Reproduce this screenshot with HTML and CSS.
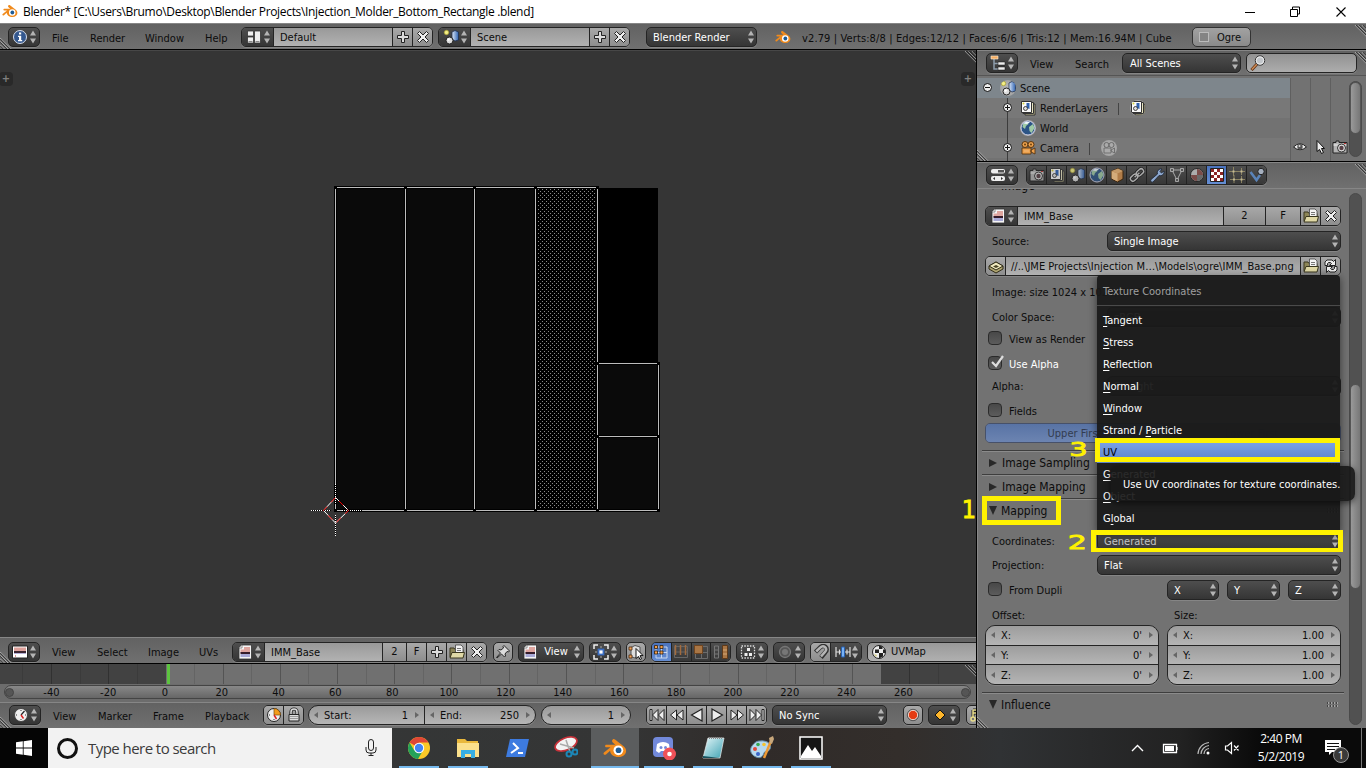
FILE: index.html
```html
<!DOCTYPE html>
<html lang="en">
<head>
<meta charset="utf-8">
<title>Blender</title>
<link rel="stylesheet" href="styles.css">
</head>
<body>
<svg class="sprite" width="0" height="0">
  <defs>
    <linearGradient id="blueg" x1="0" y1="0" x2="1" y2="0"><stop offset="0" stop-color="#dbe8fa"/><stop offset="1" stop-color="#2f62b0"/></linearGradient>
    <linearGradient id="noteg" x1="0" y1="0" x2="1" y2="1"><stop offset="0" stop-color="#e4f6f8"/><stop offset="1" stop-color="#3fa3b4"/></linearGradient>
    <pattern id="dots" x="538" y="189" width="4" height="4" patternUnits="userSpaceOnUse"><rect width="1" height="1" fill="#8a8a8a"/><rect x="2" y="2" width="1" height="1" fill="#8a8a8a"/></pattern>
  </defs>
  <symbol id="ud" viewBox="0 0 6 14"><path d="M3 0.5 6 5.5H0zM3 13.5 6 8.5H0z" fill="#b4b4b4"/></symbol>
  <symbol id="blender" viewBox="0 0 32 26"><path d="M13 1.5c1-.8 2-.7 3 .1l11.500 9c7 6 2 14.500-6.500 14.500-7 0-11.500-4-11.500-8.500L4 21.500c-2 1.500-4.500-.5-2.700-2.600L10 12H4.500c-2.300 0-2.300-3.500 0-3.500h12L13 5.500c-1.300-1-1.200-3 0-4z" fill="#f08a1c"/><circle cx="20.500" cy="16" r="6.500" fill="#fff"/><circle cx="20.700" cy="16" r="3.800" fill="#1d5b96"/></symbol>
  <symbol id="info" viewBox="0 0 16 16"><circle cx="8" cy="8" r="6.500" fill="#34588f" stroke="#d5dcea"/><path d="M7 3.500h2.200v2H7zM6 6.700h3.200V11h1v1.300H6V11h1V8H6z" fill="#fff"/></symbol>
  <symbol id="layout" viewBox="0 0 16 16"><path d="M1.500 2h6v5h-6zM1.500 8h6v6h-6zM8.500 2h6v12h-6z" fill="#eee" stroke="#333" stroke-width=".8"/><path d="M2.500 12.500h4M9.500 12.500h4" stroke="#888"/></symbol>
  <symbol id="scene" viewBox="0 0 16 16"><path d="M9 3l3-1.500L15.500 3v8L12 12 9 10z" fill="url(#blueg)" stroke="#1e3050" stroke-width=".8"/><circle cx="6.500" cy="11.500" r="3.500" fill="#ddd" stroke="#222"/><circle cx="5.500" cy="10.500" r="1.300" fill="#fff"/><circle cx="3.500" cy="3.500" r="2.200" fill="#f4ef86" stroke="#aaa136" stroke-width=".8"/></symbol>
  <symbol id="plus" viewBox="0 0 16 16"><path d="M6.500 2.500h3v4h4v3h-4v4h-3v-4h-4v-3h4z" fill="#ddd" stroke="#222"/></symbol>
  <symbol id="cross" viewBox="0 0 16 16"><path d="M4.500 2.500 8 6l3.500-3.500 2 2L10 8l3.500 3.500-2 2L8 10l-3.500 3.500-2-2L6 8 2.500 4.500z" fill="#eee" stroke="#222"/></symbol>
  <symbol id="folder" viewBox="0 0 16 16"><path d="M1 13V4h4l1 1.500h8V13z" fill="#8c8557" stroke="#3a371e"/><path d="M6.500 1h5.500l2 2v6H6.500z" fill="#f3f3f3" stroke="#444" stroke-width=".8"/><path d="M8 4.500h4M8 6.500h4" stroke="#777"/><path d="M1 14 3 8.500h12.500L14 14z" fill="#e0d9a6" stroke="#3a371e"/></symbol>
  <symbol id="image" viewBox="0 0 16 16"><path d="M5 1h9.500v14H2V4z" fill="#f5f5f5" stroke="#333" stroke-width=".8"/><path d="M2 4h3V1" fill="#fff" stroke="#666" stroke-width=".7"/><path d="M3.500 5.500H7V3h6v6H3.500z" fill="#dea59f"/><path d="M3.500 8h9.500v2H3.500z" fill="#351c2a"/><path d="M3.500 10h9.500v3H3.500z" fill="#a8a9d6"/></symbol>
  <symbol id="uvimg" viewBox="0 0 16 16"><path d="M.5 2h15v12H.5z" fill="#fff" stroke="#222"/><path d="M2 3.500h12V7H2z" fill="#dca09a"/><path d="M2 7h12v2H2z" fill="#3a2430"/><path d="M2 9h12v1H2z" fill="#b5b0d5"/><path d="M3 12h1" stroke="#b22"/></symbol>
  <symbol id="clock" viewBox="0 0 16 16"><circle cx="8" cy="8" r="6.500" fill="#f0f0f0" stroke="#444"/><path d="M8 8l3.500-4" stroke="#222" stroke-width="1.200"/><path d="M8 8l2.500 3.500" stroke="#d22" stroke-width="1.500"/><path d="M3 8h1M8 3v1M12 8h1M8 12v1" stroke="#333"/></symbol>
  <symbol id="clocko" viewBox="0 0 16 16"><circle cx="8" cy="8" r="6.500" fill="#f0f0f0" stroke="#222"/><path d="M8 8V1.500A6.500 6.500 0 0 1 14.500 8z" fill="#f49b18" stroke="#774c10" stroke-width=".7"/><path d="M8 8l2.500 4" stroke="#d22" stroke-width="1.500"/><path d="M3 8h1M8 12v1" stroke="#333"/></symbol>
  <symbol id="lock" viewBox="0 0 16 16"><path d="M5 8V5a3 3 0 0 1 6 0v3" fill="none" stroke="#222" stroke-width="3.200"/><path d="M5 8V5a3 3 0 0 1 6 0v3" fill="none" stroke="#ddd" stroke-width="1.500"/><path d="M3 7.500h10V14H3z" fill="#ddd" stroke="#222"/><path d="M4 9.500h8M4 11.500h8" stroke="#999"/></symbol>
  <symbol id="pin" viewBox="0 0 16 16"><path d="M9 1.500 14.500 7l-1 1-1.500-.5-2 2.500.5 2-1 1-3-3L2 14l-.5-.5L5.500 9 3 6.500l1-1 2 .5L8.500 4 8 2.500z" fill="#ddd" stroke="#222"/></symbol>
  <symbol id="pivot" viewBox="0 0 16 16"><path d="M1 5V1h4M11 1h4v4M15 11v4h-4M5 15H1v-4" fill="none" stroke="#eee" stroke-width="1.500"/><path d="M8 2v2M8 12v2M2 8h2M12 8h2" stroke="#aaa"/><rect x="5.500" y="5.500" width="5" height="5" fill="#fff" stroke="#3c6fc4" stroke-width="1.800"/></symbol>
  <symbol id="sync" viewBox="0 0 16 16"><path d="M3 3.500 7 1.500l5 1.500v9L7 14l-4-1.500z" fill="#ddd" stroke="#555"/><path d="M1 3h3v3H1zM1 11h3v3H1z" fill="#f2a35a" stroke="#4b2a0c" stroke-width=".8"/><path d="M8 4.500v10l2.500-2 1.500 3 1.500-.8-1.500-3 3-.2z" fill="#fff" stroke="#111"/></symbol>
  <symbol id="mvert" viewBox="0 0 16 16"><path d="M3 3h11v11H3zM3 8.500h11M8.500 3v11" fill="none" stroke="#c8d7ef"/><path d="M1.500 1.500h3v3h-3zM7 1.500h3v3H7zM1.500 7h3v3h-3zM7 7h3v3H7z" fill="#f7a04a" stroke="#30200c" stroke-width=".8"/></symbol>
  <symbol id="medge" viewBox="0 0 16 16"><path d="M1.500 2.500h13v11h-13zM1.500 8h13" fill="none" stroke="#666"/><path d="M2.500 1v10M7.500 1v10M12.500 1v10" stroke="#a26b3e" stroke-width="1.500"/></symbol>
  <symbol id="mface" viewBox="0 0 16 16"><path d="M2.500 2.500h12v12h-12zM8.500 2.500v12M2.500 8.500h12" fill="none" stroke="#6c6c6c"/><path d="M1.500 1.500h8v8h-8z" fill="#a97645" stroke="#71451f"/></symbol>
  <symbol id="misle" viewBox="0 0 16 16"><path d="M1.500 2h4v12h-4zM1.500 6h4M1.500 10h4" fill="none" stroke="#777"/><path d="M9.500 1.500h5v13h-5z" fill="#a97645" stroke="#603a19"/><path d="M10 6h4M10 10h4" stroke="#d4a675"/></symbol>
  <symbol id="sticky" viewBox="0 0 16 16"><rect x="1.500" y="2" width="13" height="12" fill="none" stroke="#ddd" stroke-width="1.300" stroke-dasharray="1.500 1.300"/><path d="M7 4h3v3H7zM4.500 9h3v3h-3zM9 9h3v3H9z" fill="#eee"/></symbol>
  <symbol id="prop" viewBox="0 0 16 16"><circle cx="8" cy="8" r="5.500" fill="#565656" stroke="#777" stroke-width="1.300"/><circle cx="8" cy="8" r="3" fill="#777"/></symbol>
  <symbol id="magnet" viewBox="0 0 16 16"><path d="M2.500 8 7 3.500c4-4 9 1 5.500 4.500L8 13.500" fill="none" stroke="#333" stroke-width="4.500"/><path d="M3.200 7.500 7.200 3.700c3.500-3.500 8 1 5 4L8 12.500" fill="none" stroke="#b5b5b5" stroke-width="2.500"/></symbol>
  <symbol id="snap" viewBox="0 0 16 16"><path d="M1 3v10M4.500 5.500v5M12 5.500v5M15 3v10M1 8h14" stroke="#ddd" stroke-width="1.200"/><path d="M6.500 3h3v10h-3z" fill="#78b2f5" stroke="#2a60ae"/></symbol>
  <symbol id="uvmap" viewBox="0 0 16 16"><circle cx="8" cy="8" r="6.500" fill="#eee" stroke="#222"/><path d="M8 5h3.500V2.500L8 1.500zM4 5.500h4V9H4zM8 9h4v3.500L8 14.500zM12 5.500h2.500V9H12z" fill="#222"/><path d="M3 10l3 1-1 2z" fill="#d8d080"/></symbol>
  <symbol id="outl" viewBox="0 0 16 16"><path d="M4 3v11h4M4 8.500h4" fill="none" stroke="#8d9cab" stroke-width="1.500"/><path d="M1 1h7v3H1z" fill="#f4ad62" stroke="#fff1df" stroke-width=".6"/><path d="M8 7h7v3H8zM8 12h7v3H8z" fill="#eee" stroke="#111" stroke-width=".5"/></symbol>
  <symbol id="mag" viewBox="0 0 16 16"><path d="M7 9 1.500 15" stroke="#5b2e12" stroke-width="3"/><path d="M7 9 1.800 14.500" stroke="#cf8b54" stroke-width="1.500"/><circle cx="10" cy="5.500" r="4.700" fill="#c2c6ca" stroke="#333"/><circle cx="10" cy="5.500" r="3.700" fill="none" stroke="#eee"/></symbol>
  <symbol id="rlay" viewBox="0 0 16 16"><path d="M5 4h10v11H5z" fill="#c9c391" stroke="#333"/><path d="M3 2.500h10.500v11H3z" fill="#e7e3c0" stroke="#333"/><path d="M1.500 1.500h10v11h-10z" fill="#fafafa" stroke="#333"/><path d="M6.500 3h3v6l-3-1z" fill="#2f62b0"/><circle cx="5.500" cy="8.500" r="2" fill="#ddd" stroke="#222" stroke-width=".8"/><circle cx="3.500" cy="3.500" r="1" fill="#d9d23c"/></symbol>
  <symbol id="world" viewBox="0 0 16 16"><circle cx="8" cy="8" r="7" fill="#2c5486" stroke="#cdcfe6" stroke-width="1"/><path d="M3 4l4-2 1.500 2L6 6 5 9 2.500 7zM9 7l4-3 1.500 4-3 5-2-2z" fill="#9fcaa6"/><path d="M3 3.500c2-2 5-2.200 7-1L7 4z" fill="#eef6fb"/></symbol>
  <symbol id="cam" viewBox="0 0 16 16"><path d="M2 8h9v6H2zM11 10l4-2v6l-4-2z" fill="currentColor" stroke="#5a3610" stroke-width=".9"/><circle cx="5" cy="4.500" r="3" fill="currentColor" stroke="#5a3610"/><circle cx="11" cy="4.500" r="3" fill="currentColor" stroke="#5a3610"/><circle cx="5" cy="4.500" r="1" fill="#6b4212"/><circle cx="11" cy="4.500" r="1" fill="#6b4212"/><path d="M4 11h5" stroke="#fff2" stroke-width="2"/></symbol>
  <symbol id="camgrey" viewBox="0 0 16 16"><path d="M3 8h7v5H3zM10 10l3.500-2v5L10 11z" fill="#aaa" stroke="#6a6a6a" stroke-width=".9"/><circle cx="5.500" cy="5" r="2.500" fill="#aaa" stroke="#6a6a6a"/><circle cx="10.500" cy="5" r="2.500" fill="#aaa" stroke="#6a6a6a"/></symbol>
  <symbol id="eye" viewBox="0 0 16 16"><path d="M1.500 8Q8 1.500 14.500 8 8 13.500 1.500 8z" fill="#eee" stroke="#222"/><circle cx="8" cy="7.800" r="2.700" fill="#555"/><circle cx="7.500" cy="7" r="1" fill="#ddd"/></symbol>
  <symbol id="arrow" viewBox="0 0 16 16"><path d="M5 1.500v11l2.500-2 2 4 2-1-2-4h3z" fill="#eee" stroke="#111"/></symbol>
  <symbol id="photo" viewBox="0 0 16 16"><path d="M1 3.500h3V2h3v1.500h8V14H1z" fill="#b4b4b4" stroke="#222"/><path d="M1.500 6h13" stroke="#eee"/><circle cx="9.500" cy="9" r="4" fill="#ddd" stroke="#333"/><circle cx="9.500" cy="9" r="2.200" fill="#574046"/><path d="M12 4.500h2" stroke="#b33"/></symbol>
  <symbol id="props" viewBox="0 0 16 16"><rect x="1" y="2" width="14" height="4.500" rx="2" fill="#eee"/><rect x="8" y="3" width="6" height="2.500" fill="#555"/><rect x="1" y="9" width="14" height="5" rx="2" fill="#eee"/><path d="M5 10v3L3 11.500zM11 10v3l2-1.500z" fill="#333"/></symbol>
  <symbol id="cube" viewBox="0 0 16 16"><path d="M2.500 4 9 1.500 14 4v8l-5.500 3-6-3z" fill="#b07c48" stroke="#3a240d"/><path d="M2.500 4l6 2.500v8l-6-3z" fill="#d3ab7a"/><path d="M2.500 4l6 2.500L14 4 9 1.500z" fill="#c59a68"/></symbol>
  <symbol id="link" viewBox="0 0 16 16"><g fill="none" transform="rotate(-42 8 8)"><g stroke="#222" stroke-width="3"><rect x="0" y="5.500" width="8" height="5" rx="2.500"/><rect x="8" y="5.500" width="8" height="5" rx="2.500"/></g><g stroke="#aaa" stroke-width="1.500"><rect x="0" y="5.500" width="8" height="5" rx="2.500"/><rect x="8" y="5.500" width="8" height="5" rx="2.500"/><path d="M5 8h6"/></g></g></symbol>
  <symbol id="wrench" viewBox="0 0 16 16"><path d="M2 12.500 8.500 7C7.500 4 10 1.500 13 2l-2 2.500 1.500 1.500L15 4c.5 3-2 5.500-5 4.500L4 15c-1.500 1-3-1-2-2.500z" fill="#8fa9d0" stroke="#1c2433" stroke-width=".8"/></symbol>
  <symbol id="mesh" viewBox="0 0 16 16"><path d="M3 3h10L8 13z" fill="none" stroke="#aaa"/><path d="M1.500 1.500h3v3h-3zM11.500 1.500h3v3h-3zM6.500 11.500h3v3h-3z" fill="#555" stroke="#bbb" stroke-width=".8"/></symbol>
  <symbol id="mat" viewBox="0 0 16 16"><circle cx="8" cy="8" r="6.500" fill="#cfcfcf" stroke="#1d1d1d"/><path d="M8 2a6 6 0 0 1 6 6H8zM2 8h6v6a6 6 0 0 1-6-6z" fill="#8e4f4b"/><path d="M8 14V8h6a6 6 0 0 1-6 6z" fill="#777"/></symbol>
  <symbol id="tex" viewBox="0 0 16 16"><path d="M1.500 1.500h13v13h-13z" fill="#fff" stroke="#222"/><path d="M2 2h3v3H2zM8 2h3v3H8zM5 5h3v3H5zM11 5h3v3h-3zM2 8h3v3H2zM8 8h3v3H8zM5 11h3v3H5zM11 11h3v3h-3z" fill="#8b2424"/></symbol>
  <symbol id="part" viewBox="0 0 16 16"><path d="M4.500 0v9M0 4.500h9M12.500 1v7M9 4.500h7M5 8v8M1 12.500h8M12.500 9v7M9 12.500h7" stroke="#a3986c" stroke-width="1"/><path d="M3.500 3.500h2v2h-2zM11.500 3.500h2v2h-2zM4 11.500h2v2H4zM11.500 11.500h2v2h-2z" fill="#eee2b2"/></symbol>
  <symbol id="phys" viewBox="0 0 16 16"><path d="M1.500 5 7.500 13 11 8" fill="none" stroke="#5a83b8" stroke-width="2.500"/><circle cx="12" cy="4.500" r="3.200" fill="#a6b0bf" stroke="#222"/></symbol>
  <symbol id="pack" viewBox="0 0 16 16"><path d="M1 8 8 4l7 4v3l-7 4-7-4z" fill="#b0a570" stroke="#2f2b17"/><path d="M1 8 8 4l7 4-7 4z" fill="#efe8bd" stroke="#2f2b17"/><path d="M5 8.500 8 7l3 1.500L8 10z" fill="#4b4527"/></symbol>
  <symbol id="reload" viewBox="0 0 16 16"><path d="M2 7.500V4l2-2h5l1.500 1.500 2-2v6h-6l2-2L7.500 4.500h-2l-1 1v2zM14 8.500V12l-2 2H7l-1.500-1.500-2 2v-6h6l-2 2 1 1h2l1-1v-2z" fill="#eee" stroke="#222"/></symbol>
  <symbol id="pfirst" viewBox="0 0 18 16"><path d="M2 2.500h2v11H2zM10 2.500v11L4.500 8zM16 2.500v11L10.500 8z" fill="#eee" stroke="#222"/></symbol>
  <symbol id="prew" viewBox="0 0 18 16"><path d="M8.500 3v10L2.500 8zM15 3v10L9 8z" fill="#eee" stroke="#222"/></symbol>
  <symbol id="pback" viewBox="0 0 18 16"><path d="M14 2v12L3.500 8z" fill="#eee" stroke="#222" stroke-width="1.200"/></symbol>
  <symbol id="diamond" viewBox="0 0 16 16"><path d="M8 3l5 5-5 5-5-5z" fill="#fcb52b" stroke="#111"/></symbol>
  <symbol id="rec" viewBox="0 0 16 16"><circle cx="8" cy="8" r="4.700" fill="#e53b12" stroke="#f5d8cc"/><circle cx="8" cy="8" r="5.700" fill="none" stroke="#444" stroke-width=".8"/></symbol>
  <symbol id="grip" viewBox="0 0 14 14"><path d="M0 1 13 14M0 5l9 9M0 9l5 5" stroke="#ccc"/><path d="M0 2 12 14M0 6l8 8M0 10l4 4" stroke="#222"/></symbol>
  <symbol id="gript" viewBox="0 0 14 14"><path d="M1 0 14 13M5 0l9 9M9 0l5 5" stroke="#ccc"/><path d="M2 0 14 12M6 0l8 8M10 0l4 4" stroke="#222"/></symbol>
</svg>

<header class="titlebar">
  <svg class="title-logo"><use href="#blender"/></svg>
  <span class="title-text">Blender* [C:\Users\Brumo\Desktop\Blender Projects\Injection_Molder_Bottom_Rectangle .blend]</span>
  <svg class="win-ctrl" viewBox="0 0 110 20"><path d="M5 10.500h10M50.500 7.500h7v7h-7zM52.500 7v-2h7v7h-2" fill="none" stroke="#000"/><path d="M96.500 5.500l9 9M105.500 5.500l-9 9" stroke="#000" stroke-width="1.100"/></svg>
</header>

<main class="app">
  <div class="header info-header">
    <svg class="grip grip-bl"><use href="#grip"/></svg>
    <div class="dark ed"><svg class="ic"><use href="#info"/></svg><svg class="ud"><use href="#ud"/></svg></div>
    <span>File</span><span>Render</span><span>Window</span><span>Help</span>
    <div class="block top-block"><div class="sel"><svg class="ic"><use href="#layout"/></svg><svg class="ud"><use href="#ud"/></svg></div><div class="name">Default</div><div class="btn"><svg class="ic"><use href="#plus"/></svg></div><div class="btn"><svg class="ic"><use href="#cross"/></svg></div></div>
    <div class="block top-block"><div class="sel"><svg class="ic"><use href="#scene"/></svg><svg class="ud"><use href="#ud"/></svg></div><div class="name">Scene</div><div class="btn"><svg class="ic"><use href="#plus"/></svg></div><div class="btn"><svg class="ic"><use href="#cross"/></svg></div></div>
    <div class="dark drop engine">Blender Render<svg class="ud"><use href="#ud"/></svg></div>
    <svg class="ic"><use href="#blender"/></svg>
    <span class="stats">v2.79 | Verts:8/8 | Edges:12/12 | Faces:6/6 | Tris:12 | Mem:16.94M | Cube</span>
    <div class="ogre"><i></i>Ogre</div>
    <svg class="grip grip-tr"><use href="#gript"/></svg>
  </div>

  <div class="work">
    <section class="left">
      <div class="canvas">
        <svg class="uv" viewBox="0 50 976 587">
          <rect x="336" y="188" width="322" height="323" fill="#000"/>
          <rect x="336" y="188" width="262" height="323" fill="#0a0a0a"/>
          <rect x="598" y="363" width="61" height="148" fill="#0a0a0a"/>
          <rect x="537" y="189" width="60" height="321" fill="#000"/>
          <rect x="538" y="189" width="58" height="320" fill="url(#dots)"/>
          <path d="M335.500 187.500H597.500V510.500M335.500 187.500V510.500H658.500V363.500H597.500M405.500 187.500V510.500M474.500 187.500V510.500M535.500 187.500V510.500M597.500 436.500H658.500" fill="none" stroke="#000" stroke-width="3"/>
          <path d="M335.500 187.500H597.500V510.500M335.500 187.500V510.500H658.500V363.500H597.500M405.500 187.500V510.500M474.500 187.500V510.500M535.500 187.500V510.500M597.500 436.500H658.500" fill="none" stroke="#bdbdbd"/>
          <path d="M334 186h3v3h-3zM404 186h3v3h-3zM473 186h3v3h-3zM534 186h3v3h-3zM596 186h3v3h-3zM334 509h3v3h-3zM404 509h3v3h-3zM473 509h3v3h-3zM534 509h3v3h-3zM596 509h3v3h-3zM657 509h3v3h-3zM596 362h3v3h-3zM657 362h3v3h-3zM596 435h3v3h-3zM657 435h3v3h-3z"/>
          <path d="M311 510.500h20M342 510.500h20M335.500 484v20M335.500 515v21" stroke="#000"/>
          <path d="M311 510.500h20M342 510.500h20M335.500 484v20M335.500 515v21" stroke="#fff" stroke-dasharray="1 1"/>
          <path d="M335.500 497.500 348.500 510.500 335.500 523 323.500 510.500z" fill="none" stroke="#fff"/>
          <path d="M335.500 497.500 348.500 510.500 335.500 523 323.500 510.500z" fill="none" stroke="#e00" stroke-dasharray="6 6" stroke-dashoffset="-5"/>
        </svg>
        <b class="tab-l">+</b><b class="tab-r">+</b>
        <svg class="grip grip-tr"><use href="#gript"/></svg>
      </div>
      <div class="header uv-header">
        <svg class="grip grip-bl"><use href="#grip"/></svg>
        <div class="dark ed"><svg class="ic"><use href="#uvimg"/></svg><svg class="ud"><use href="#ud"/></svg></div>
        <span>View</span><span>Select</span><span>Image</span><span>UVs</span>
        <div class="block uv-block"><div class="sel"><svg class="ic"><use href="#image"/></svg><svg class="ud"><use href="#ud"/></svg></div><div class="name">IMM_Base</div><div class="btn users">2</div><div class="btn">F</div><div class="btn"><svg class="ic"><use href="#plus"/></svg></div><div class="btn"><svg class="ic"><use href="#folder"/></svg></div><div class="btn"><svg class="ic"><use href="#cross"/></svg></div></div>
        <div class="light sq"><svg class="ic"><use href="#pin"/></svg></div>
        <div class="dark ed viewdrop"><svg class="ic"><use href="#image"/></svg>View<svg class="ud"><use href="#ud"/></svg></div>
        <div class="dark ed"><svg class="ic"><use href="#pivot"/></svg><svg class="ud"><use href="#ud"/></svg></div>
        <div class="light sq"><svg class="ic"><use href="#sync"/></svg></div>
        <div class="tabs modes"><div class="on"><svg class="ic"><use href="#mvert"/></svg></div><div><svg class="ic"><use href="#medge"/></svg></div><div><svg class="ic"><use href="#mface"/></svg></div><div><svg class="ic"><use href="#misle"/></svg></div></div>
        <div class="dark ed"><svg class="ic"><use href="#sticky"/></svg><svg class="ud"><use href="#ud"/></svg></div>
        <div class="dark ed"><svg class="ic"><use href="#prop"/></svg><svg class="ud"><use href="#ud"/></svg></div>
        <div class="block snap"><div class="btn"><svg class="ic"><use href="#magnet"/></svg></div><div class="sel"><svg class="ic"><use href="#snap"/></svg><svg class="ud"><use href="#ud"/></svg></div></div>
        <div class="light uvmap"><svg class="ic"><use href="#uvmap"/></svg>UVMap</div>
      </div>
      <div class="timeline">
        <div class="strip">
          <svg viewBox="0 0 976 20"><rect x="166" width="715" height="20" fill="#707070"/><path d="M22.500 0v20M80.500 0v20M137.500 0v20M194.500 0v20M251.500 0v20M308.500 0v20M366.500 0v20M423.500 0v20M480.500 0v20M537.500 0v20M595.500 0v20M652.500 0v20M709.500 0v20M766.500 0v20M823.500 0v20M938.500 0v20" stroke="#000" stroke-opacity=".1"/><path d="M51.500 0v20M108.500 0v20M223.500 0v20M280.500 0v20M337.500 0v20M394.500 0v20M451.500 0v20M509.500 0v20M566.500 0v20M623.500 0v20M680.500 0v20M738.500 0v20M795.500 0v20M852.500 0v20M909.500 0v20" stroke="#000" stroke-opacity=".25"/><rect x="167" width="3" height="20" fill="#5cc43f"/></svg>
          <svg class="grip grip-tr"><use href="#gript"/></svg>
        </div>
        <div class="scroll"><i></i><div class="nums"><span>-40</span><span>-20</span><span>0</span><span>20</span><span>40</span><span>60</span><span>80</span><span>100</span><span>120</span><span>140</span><span>160</span><span>180</span><span>200</span><span>220</span><span>240</span><span>260</span></div><i></i></div>
      </div>
      <div class="header time-header">
        <svg class="grip grip-bl"><use href="#grip"/></svg>
        <div class="dark ed"><svg class="ic"><use href="#clock"/></svg><svg class="ud"><use href="#ud"/></svg></div>
        <span>View</span><span>Marker</span><span>Frame</span><span>Playback</span>
        <div class="block"><div class="btn"><svg class="ic"><use href="#clocko"/></svg></div><div class="btn"><svg class="ic"><use href="#lock"/></svg></div></div>
        <div class="num range"><div><em class="la"></em>Start:<b>1</b><em class="ra"></em></div><div><em class="la"></em>End:<b>250</b><em class="ra"></em></div></div>
        <div class="num cur"><div><em class="la"></em><b>1</b><em class="ra"></em></div></div>
        <div class="block play"><div class="btn"><svg><use href="#pfirst"/></svg></div><div class="btn"><svg><use href="#prew"/></svg></div><div class="btn"><svg><use href="#pback"/></svg></div><div class="btn flip"><svg><use href="#pback"/></svg></div><div class="btn flip"><svg><use href="#prew"/></svg></div><div class="btn flip"><svg><use href="#pfirst"/></svg></div></div>
        <div class="dark drop nosync">No Sync<svg class="ud"><use href="#ud"/></svg></div>
        <div class="light sq"><svg class="ic"><use href="#rec"/></svg></div>
        <div class="dark ed"><svg class="ic"><use href="#diamond"/></svg><svg class="ud"><use href="#ud"/></svg></div>
        <div class="light keyset"><svg viewBox="0 0 10 16"><path d="M6 3h4M6 3v7M6 6h3" fill="none" stroke="#222" stroke-width="3"/><path d="M6 3h4M6 3v7M6 6h3" fill="none" stroke="#e9dd8a" stroke-width="1.500"/><circle cx="6" cy="12" r="2" fill="#777" stroke="#e9dd8a" stroke-width="1.500"/></svg></div>
      </div>
    </section>

    <aside class="right">
      <div class="header out-header">
        <div class="dark ed"><svg class="ic"><use href="#outl"/></svg><svg class="ud"><use href="#ud"/></svg></div>
        <span>View</span><span>Search</span>
        <div class="dark drop scenes">All Scenes<svg class="ud"><use href="#ud"/></svg></div>
        <div class="light find"><svg class="ic"><use href="#mag"/></svg></div>
        <svg class="grip grip-tr"><use href="#gript"/></svg>
      </div>
      <div class="outliner">
        <div class="tree">
          <div class="trow picked"><i class="tog minus"></i><svg class="ic halo"><use href="#scene"/></svg>Scene</div>
          <div class="trow in1"><i class="tog"></i><svg class="ic"><use href="#rlay"/></svg>RenderLayers<s></s><svg class="ic halo"><use href="#rlay"/></svg></div>
          <div class="trow in1 alt"><i class="tog none"></i><svg class="ic halo"><use href="#world"/></svg>World</div>
          <div class="trow in1"><i class="tog"></i><svg class="ic camera"><use href="#cam"/></svg>Camera<s></s><svg class="ic halo"><use href="#camgrey"/></svg></div>
          <div class="trow in1 alt lastrow"><i class="tog none"></i><svg class="ic camera"><use href="#cam"/></svg><svg class="ic halo lampdata"><use href="#camgrey"/></svg></div>
        </div>
        <div class="flags"><div><svg class="ic"><use href="#eye"/></svg></div><div><svg class="ic"><use href="#arrow"/></svg></div><div><svg class="ic"><use href="#photo"/></svg></div></div>
        <div class="bar outbar"><i></i></div>
        <svg class="branch" viewBox="0 0 20 66"><path d="M.5 0v66M.5 50.500h0" stroke="#3c3c3c"/></svg>
        <svg class="grip grip-bl"><use href="#grip"/></svg>
      </div>
      <div class="header prop-header">
        <div class="dark ed"><svg class="ic"><use href="#props"/></svg><svg class="ud"><use href="#ud"/></svg></div>
        <div class="tabs"><div><svg class="ic dim"><use href="#photo"/></svg></div><div><svg class="ic dim"><use href="#rlay"/></svg></div><div><svg class="ic dim"><use href="#scene"/></svg></div><div><svg class="ic dim"><use href="#world"/></svg></div><div><svg class="ic"><use href="#cube"/></svg></div><div><svg class="ic"><use href="#link"/></svg></div><div><svg class="ic"><use href="#wrench"/></svg></div><div><svg class="ic"><use href="#mesh"/></svg></div><div><svg class="ic dim"><use href="#mat"/></svg></div><div class="on"><svg class="ic"><use href="#tex"/></svg></div><div><svg class="ic dim"><use href="#part"/></svg></div><div><svg class="ic"><use href="#phys"/></svg></div></div>
        <svg class="grip grip-tr"><use href="#gript"/></svg>
      </div>
      <div class="props">
        <div class="panels">
          <div class="phead clipped"><em class="tri open"></em>Image<u class="dots"></u></div>
          <div class="block img-block"><div class="sel"><svg class="ic"><use href="#image"/></svg><svg class="ud"><use href="#ud"/></svg></div><div class="name">IMM_Base</div><div class="btn users">2</div><div class="btn fake">F</div><div class="btn"><svg class="ic"><use href="#folder"/></svg></div><div class="btn"><svg class="ic"><use href="#cross"/></svg></div></div>
          <div class="row m5"><label>Source:</label><div class="dark drop w234">Single Image<svg class="ud"><use href="#ud"/></svg></div></div>
          <div class="block path-block"><div class="btn"><svg class="ic"><use href="#pack"/></svg></div><div class="name">//..\JME Projects\Injection M…\Models\ogre\IMM_Base.png</div><div class="btn"><svg class="ic"><use href="#folder"/></svg></div><div class="btn"><svg class="ic"><use href="#reload"/></svg></div></div>
          <div class="row m6"><label>Image: size 1024 x 1024, RGBA byte</label></div>
          <div class="row m5"><label>Color Space:</label><div class="dark drop w234">sRGB<svg class="ud"><use href="#ud"/></svg></div></div>
          <div class="row m2 chk"><i></i>View as Render</div>
          <div class="row m5 chk checked"><i><svg viewBox="0 0 16 16"><path d="M3 8l4 4 7-10" fill="none" stroke="#ddd" stroke-width="2.200"/></svg></i>Use Alpha</div>
          <div class="row m2"><label>Alpha:</label><div class="dark drop w234">Straight<svg class="ud"><use href="#ud"/></svg></div></div>
          <div class="row m5 chk"><i></i>Fields</div>
          <div class="order"><div>Upper First</div><div>Lower First</div></div>
          <div class="phead first"><em class="tri"></em>Image Sampling<u class="dots"></u></div>
          <div class="phead"><em class="tri"></em>Image Mapping<u class="dots"></u></div>
          <div class="phead"><em class="tri open"></em>Mapping<u class="dots"></u></div>
          <div class="row m9"><label>Coordinates:</label><div class="dark drop w244 pressed">Generated<svg class="ud"><use href="#ud"/></svg></div></div>
          <div class="row m4"><label>Projection:</label><div class="dark drop w244">Flat<svg class="ud"><use href="#ud"/></svg></div></div>
          <div class="row m5 chk"><i></i>From Dupli<div class="axes"><div class="dark drop">X<svg class="ud"><use href="#ud"/></svg></div><div class="dark drop">Y<svg class="ud"><use href="#ud"/></svg></div><div class="dark drop">Z<svg class="ud"><use href="#ud"/></svg></div></div></div>
          <div class="vectors">
            <div><label>Offset:</label><div class="num stack"><div><em class="la"></em>X:<b>0'</b><em class="ra"></em></div><div><em class="la"></em>Y:<b>0'</b><em class="ra"></em></div><div><em class="la"></em>Z:<b>0'</b><em class="ra"></em></div></div></div>
            <div><label>Size:</label><div class="num stack"><div><em class="la"></em>X:<b>1.00</b><em class="ra"></em></div><div><em class="la"></em>Y:<b>1.00</b><em class="ra"></em></div><div><em class="la"></em>Z:<b>1.00</b><em class="ra"></em></div></div></div>
          </div>
          <div class="phead first"><em class="tri open"></em>Influence<u class="dots"></u></div>
        </div>
        <div class="bar propbar"><i></i></div>
        <svg class="grip grip-bl"><use href="#grip"/></svg>

        <div class="menu">
          <div class="mtitle">Texture Coordinates</div>
          <div><u>T</u>angent</div><div><u>S</u>tress</div><div><u>R</u>eflection</div><div><u>N</u>ormal</div><div><u>W</u>indow</div><div>Strand / <u>P</u>article</div><div class="hot"><u>U</u>V</div><div><u>G</u>enerated</div><div><u>O</u>bject</div><div>G<u>l</u>obal</div>
        </div>
        <div class="tip">Use UV coordinates for texture coordinates.</div>
        <div class="mark mark-map"></div><div class="mark mark-uv"></div><div class="mark mark-gen"></div>
        <b class="digit d2">2</b><b class="digit d3">3</b>
      </div>
    </aside>
  </div>
  <b class="digit d1">1</b>
</main>

<footer class="taskbar">
  <div class="start"><svg viewBox="0 0 16 16"><path d="M0 2.200 6.800 1.300V7.600H0zM7.600 1.200 16 0v7.600H7.600zM0 8.400h6.800v6.400L0 13.800zM7.600 8.400H16V16l-8.400-1.200z" fill="#fff"/></svg></div>
  <div class="search"><i></i><span>Type here to search</span><svg viewBox="0 0 12 18"><rect x="3.500" y=".5" width="5" height="11" rx="2.500" fill="none" stroke="#222"/><path d="M1 8v3q0 3 3 3h4q3 0 3-3V8M6 14v3M3.500 16.500h5" fill="none" stroke="#222"/></svg></div>
  <div class="apps">
    <div class="run"><svg viewBox="0 0 24 24"><circle cx="12" cy="12" r="11" fill="#fbc927"/><path d="M12 12 2.500 6.500A11 11 0 0 1 21.500 6.500H12z" fill="#df4736"/><path d="M2.500 6.500A11 11 0 0 0 11 23l5-8.500-4-2.500-5 2z" fill="#24a25a"/><circle cx="12" cy="12" r="5.200" fill="#fff"/><circle cx="12" cy="12" r="4.200" fill="#4385f4"/></svg></div>
    <div class="run"><svg viewBox="0 0 24 24"><path d="M1 3h8l2 2h11v16H1z" fill="#e9b83c"/><path d="M1 7h22v14H1z" fill="#fbe08c"/><path d="M5 22v-8h14v8h-4v-4H9v4z" fill="#37aee3"/></svg></div>
    <div><svg viewBox="0 0 24 24"><path d="M5 3h19l-4 18H1z" fill="#3d7be0"/><path d="M8 7l5 5-7 5M13 17h5" fill="none" stroke="#fff" stroke-width="2"/></svg></div>
    <div><svg viewBox="0 0 24 24"><ellipse cx="12" cy="8" rx="11.500" ry="6" transform="rotate(-22 12 8)" fill="#f3f3f3" stroke="#c8323a" stroke-width="1.700"/><path d="M6 8l14 4M12 4l4 12" stroke="#aaa" stroke-width="1.500"/><circle cx="15" cy="18" r="2.500" fill="none" stroke="#1c87b8" stroke-width="2"/><circle cx="21" cy="16" r="2.500" fill="none" stroke="#1c87b8" stroke-width="2"/></svg></div>
    <div class="run now"><svg viewBox="0 0 32 26"><use href="#blender"/></svg></div>
    <div class="run"><svg viewBox="0 0 24 24"><rect x="1" y="1" width="20" height="20" rx="4" fill="#7289da"/><path d="M5 8q6-4 12 0l1 7-3 2-2-2H9l-2 2-3-2z" fill="#fff"/><circle cx="9" cy="11.500" r="1.500" fill="#7289da"/><circle cx="13.500" cy="11.500" r="1.500" fill="#7289da"/><circle cx="17.500" cy="18" r="6.500" fill="#ef5158"/><circle cx="17.500" cy="18" r="2.300" fill="#fff"/></svg></div>
    <div class="run"><svg viewBox="0 0 24 24"><path d="M7 2h16l-4 20H2z" fill="url(#noteg)" stroke="#eee" stroke-width=".7"/><path d="M19 22 2 20v2z" fill="#17535f"/><path d="M8 2h14" stroke="#888" stroke-dasharray="1 1" stroke-width="2"/></svg></div>
    <div class="run"><svg viewBox="0 0 24 24"><path d="M10 5c8-1 12 4 10 8s-5 1-6 4-3 6-8 4-7-7-4-11 5-5 8-5z" fill="#b7d9ee" stroke="#638ca8"/><circle cx="5" cy="13" r="2" fill="#e04a3a"/><circle cx="8" cy="8.500" r="1.800" fill="#35a853"/><circle cx="14" cy="8.500" r="1.800" fill="#f5c430"/><circle cx="8" cy="18" r="2" fill="#3a65c9"/><path d="M14 22 21 5" stroke="#ed9a35" stroke-width="2.500"/><path d="M20 7 19 2l4-2 1 3-2 5z" fill="#c7a77b"/></svg></div>
    <div class="run"><svg viewBox="0 0 24 24"><path d="M1 1h22v22H1z" fill="#151515" stroke="#fff" stroke-width="1.500"/><path d="M2 20 9 9l4 6 3-4 6 9v2H2z" fill="#fff"/></svg></div>
  </div>
  <svg class="tray" viewBox="0 0 120 24"><path d="M4 15l5.500-5.500L15 15" fill="none" stroke="#fff" stroke-width="1.400"/><path d="M35.500 8.500h13v8h-13zM49 11v3" fill="none" stroke="#fff" stroke-width="1.300"/><path d="M37 10h9v5h-9z" fill="#fff"/><path d="M70 18a12 12 0 0 1 11-11.500M73 18a9 9 0 0 1 8-8.500M76 18a6 6 0 0 1 5-5.500" fill="none" stroke="#bbb" stroke-width="1.200"/><circle cx="80" cy="17" r="1.500" fill="#fff"/><path d="M97.500 10h2l4-3.500v11l-4-3.500h-2zM106 9.500l4.500 5M110.500 9.500l-4.500 5" fill="none" stroke="#fff" stroke-width="1.200"/></svg>
  <div class="time"><span>2:40 PM</span><span>5/2/2019</span></div>
  <div class="note"><svg viewBox="0 0 16 15"><path d="M0 0h16v12h-9l-3 3v-3H0z" fill="#fff"/><path d="M2 3.500h12M2 6.500h12M2 9.500h8" stroke="#111"/></svg><b>1</b></div>
  <div class="peek"></div>
</footer>
</body>
</html>
```
FILE: styles.css
```css
* { box-sizing: border-box; }
body { margin: 0; width: 1366px; height: 768px; overflow: hidden; display: flex; flex-direction: column; background: #000; color: #0c0c0c; font: 11px/20px "DejaVu Sans Condensed", "DejaVu Sans", sans-serif; font-stretch: condensed; white-space: nowrap; }
svg { display: block; flex: none; }
i, em { font-style: normal; flex: none; }
.sprite { position: absolute; }
.ic { width: 16px; height: 16px; }
.ud { width: 6px; height: 14px; }

.titlebar { height: 23px; background: #fff; display: flex; align-items: center; padding-left: 2px; font: 12px/22px "Open Sans", "Noto Sans", sans-serif; color: #000; }
.title-logo { width: 16px; height: 14px; margin: 0 5px 2px 0; }
.title-text { letter-spacing: -.33px; }
.win-ctrl { width: 110px; height: 20px; margin-left: auto; margin-right: 16px; }

.app { height: 705px; position: relative; display: flex; flex-direction: column; }
.work { display: flex; height: 678px; }
.left { width: 976px; display: flex; flex-direction: column; overflow: hidden; }
.right { width: 390px; border-left: 1px solid #000; box-shadow: inset 1px 0 #888; display: flex; flex-direction: column; }

.header { position: relative; background: linear-gradient(#626262, #707070); border-top: 1px solid #868686; display: grid; justify-items: start; align-items: start; flex: none; overflow: hidden; }
.grip { position: absolute; width: 12px; height: 12px; }
.grip-bl { left: 0; bottom: 0; }
.grip-tr { right: 0; top: 1px; }
.info-header { height: 27px; border-bottom: 1px solid #000; padding: 3px 0 0 8px; grid-template-columns: 44px 38px 55px 60px 36px 197px 208px 129px 27px 390px 60px; }
.uv-header { height: 27px; border-bottom: 1px solid #000; padding: 4px 0 0 8px; grid-template-columns: 44px 45px 51px 51px 33px 261px 25px 71px 37px 25px 85px 37px 37px 57px 109px; }
.time-header { height: 26px; padding: 2px 0 0 9px; grid-template-columns: 44px 45px 55px 52px 58px 45px 233px 105px 126px 131px 25px 38px 11px; }
.out-header { height: 26px; padding: 2px 0 0 9px; grid-template-columns: 44px 45px 47px 124px 111px; border-bottom: 1px solid #555; }
.prop-header { height: 26px; padding: 2px 0 0 9px; grid-template-columns: 40px 240px; }
.header > span { line-height: 24px; height: 20px; }
.uv-header > span { line-height: 22px; }
.info-header > .ic { margin-top: 2px; }
.stats { letter-spacing: .12px; }

.dark, .light, .block, .tabs, .num { height: 20px; border: 1px solid #242424; border-radius: 5px; display: flex; align-items: center; overflow: hidden; box-shadow: 0 1px #858585; }
.block { flex: none; }
.dark, .sel { background: linear-gradient(#4e4e4e, #353535); color: #fff; }
.light, .btn { background: linear-gradient(#a8a8a8, #8e8e8e); }
.ed { width: 32px; justify-content: space-between; padding: 0 3px 0 3px; }
.sq { width: 20px; justify-content: center; }
.drop { justify-content: space-between; padding: 2px 2px 0 6px; }
.drop .ud { margin-top: -2px; }
.block > div { height: 18px; display: flex; align-items: center; justify-content: center; border-left: 1px solid #242424; flex: none; }
.block > div:first-child { border-left: 0; }
.block > .sel { width: 31px; justify-content: space-between; padding: 0 3px 0 4px; }
.block > .name { justify-content: flex-start; padding: 2px 0 0 6px; background: linear-gradient(#999, #b2b2b2); flex: 1; }
.block > .btn { width: 20px; }
.block > .btn:first-child { width: 19px; }
.top-block { width: 192px; }
.engine { width: 111px; }
.ogre { width: 59px; height: 20px; border: 1px solid #333; border-radius: 5px; background: linear-gradient(#a2a2a2, #8a8a8a); display: flex; align-items: center; padding: 2px 0 0 6px; gap: 8px; }
.ogre i { width: 10px; height: 10px; background: #848484; border: 1px solid #bbb; margin-top: -2px; }

.canvas { height: 587px; background: #353535; position: relative; box-shadow: inset 0 1px #474747; }
.uv { width: 976px; height: 587px; }
.tab-l, .tab-r { position: absolute; top: 22px; width: 14px; height: 14px; background: #292929; border-radius: 4px; color: #808080; font-size: 11px; line-height: 14px; text-align: center; }
.tab-l { left: -1px; }
.tab-r { right: 1px; }

.uv-block { width: 255px; }
.uv-block > .users { width: 24px; }
.viewdrop { width: 66px; }
.tabs > div { width: 20px; height: 18px; display: flex; justify-content: center; align-items: center; border-left: 1px solid #222; background: linear-gradient(#4e4e4e, #373737); }
.tabs > div:first-child { border-left: 0; width: 19px; }
.tabs > .on { background: linear-gradient(#4b73bd, #658ed4); }
.modes { width: 80px; }
.snap { width: 52px; }
.dim { opacity: .75; }
.uvmap { width: 120px; padding-left: 3px; gap: 4px; background: linear-gradient(#999, #b0b0b0); border-radius: 5px 0 0 5px; }

.timeline { height: 38px; background: #6c6c6c; }
.strip { height: 20px; background: #424242; position: relative; }
.scroll { width: 967px; height: 14px; margin: 1px 0 0 4px; border: 1px solid #444; border-radius: 7px; background: linear-gradient(#888, #666); display: flex; align-items: center; justify-content: space-between; }
.scroll > i { width: 9px; height: 9px; border-radius: 5px; background: #555; border: 1px solid #444; }
.nums { display: flex; line-height: 13px; margin: 0 auto 0 9px; }
.nums span { width: 56.8px; text-align: center; }
.nums { margin-left: 9px; }

.num { background: linear-gradient(#9a9a9a, #b6b6b6); border-radius: 10px; }
.num > div { display: flex; align-items: center; flex: 1; height: 18px; padding: 2px 5px 0; }
.num b { font-weight: normal; margin-left: auto; margin-right: 7px; }
.la, .ra { border: 3px solid transparent; width: 0; height: 0; margin-top: -2px; }
.la { border-right: 4px solid #666; border-left: 0; margin-right: 6px; }
.ra { border-left: 4px solid #666; border-right: 0; }
.range { width: 228px; }
.range > div + div { border-left: 1px solid #242424; flex: 0 0 111px; }
.cur { width: 90px; }
.play svg { width: 18px; height: 16px; }
.flip svg { transform: scaleX(-1); }
.nosync { width: 115px; }
.keyset { width: 20px; }
.keyset svg { width: 10px; height: 16px; }
.scenes { width: 119px; padding-left: 7px; }
.find { width: 111px; padding-left: 3px; background: linear-gradient(#929292, #adadad); }

.outliner { height: 86px; border-bottom: 1px solid #000; display: flex; background: #727272; position: relative; overflow: hidden; padding-top: 2px; flex: none; }
.tree { width: 313px; }
.trow { height: 20px; display: flex; align-items: center; padding: 1px 0 0 6px; background: #787878; }
.trow.alt { background: #727272; }
.trow.picked { background: #7e868c; }
.trow .ic { margin: -2px 4px 0 8px; position: relative; z-index: 1; }
.trow.in1 { padding-left: 26px; }
.trow.picked .ic { margin-right: 4px; }
.tog { width: 9px; height: 9px; margin-top: -2px; border: 1px solid #111; border-radius: 5px; background: linear-gradient(#111, #111) center/5px 1px no-repeat, linear-gradient(#111, #111) center/1px 5px no-repeat, #eee; position: relative; z-index: 1; }
.tog.minus { background: linear-gradient(#111, #111) center/5px 1px no-repeat, #eee; box-shadow: none; }
.tog.none { visibility: hidden; }
.branch { position: absolute; left: 30px; top: 22px; width: 20px; height: 66px; }
.halo { background: radial-gradient(#bbb, #999); border-radius: 8px; }
.trow s { width: 1px; height: 12px; background: #444; margin: 0 3px 0 10px; }
.camera { color: #eda14d; }
.trow .lampdata { margin-left: 44px; }
.flags { display: flex; }
.flags > div { width: 20px; border-left: 1px solid #5f5f5f; padding: 61px 0 0 1px; height: 86px; }
.bar { width: 13px; border: 1px solid #4a4a4a; border-radius: 7px; background: #515151; }
.bar i { display: block; width: 11px; border-radius: 6px; border: 1px solid #555; background: linear-gradient(90deg, #999, #777); }
.outbar { height: 76px; margin: 3px 0 0 -1px; }
.outbar i { height: 52px; }

.props { height: 540px; position: relative; display: flex; background: #727272; border-top: 1px solid #868686; box-shadow: inset 1px 0 #888; overflow: hidden; padding-left: 8px; }
.panels { width: 356px; display: flex; flex-direction: column; }
.phead { height: 24px; flex: none; border-top: 1px solid #3e3e3e; box-shadow: inset 0 1px #8b8b8b; margin: 0 -3px; padding: 0 6px 0 7px; display: flex; align-items: center; font-size: 12px; }
.clipped { height: 31px; margin-top: -14px; border: 0; box-shadow: none; padding-bottom: 10px; }
.tri { border-left: 8px solid #282828; border-top: 4.500px solid transparent; border-bottom: 4.500px solid transparent; margin-right: 5px; }
.tri.open { border-top: 9px solid #282828; border-left: 4.500px solid transparent; border-right: 4.500px solid transparent; border-bottom: 0; margin-right: 4px; }
.dots { width: 11px; height: 5px; margin-left: auto; background: linear-gradient(#727272, #727272) 0 2px/100% 1px no-repeat, repeating-linear-gradient(90deg, #444 0 1px, #a5a5a5 1px 2px, #727272 2px 3px); }
.img-block > .users { width: 42px; }
.img-block > .fake { width: 35px; }
.path-block { margin-top: 5px; }
.path-block > .name { padding-left: 5px; letter-spacing: .02px; }
.row { height: 20px; flex: none; display: flex; align-items: center; justify-content: space-between; }
.row label, .vectors label { padding: 2px 0 0 7px; line-height: 20px; }
.m2 { margin-top: 2px; } .m4 { margin-top: 4px; } .m5 { margin-top: 5px; } .m6 { margin-top: 6px; } .m9 { margin-top: 9px; }
.w234 { width: 234px; }
.w244 { width: 244px; }
.pressed { color: #c8c8c8; }
.chk { justify-content: flex-start; padding: 1px 0 0 3px; }
.chk > i { width: 14px; height: 14px; border: 1px solid #2b2b2b; border-radius: 4px; background: linear-gradient(#484848, #5c5c5c); margin: -3px 7px 0 0; }
.chk svg { width: 16px; height: 16px; }
.chk i svg { margin-top: -3px; }
.chk i ~ .axes svg { width: 6px; height: 14px; }
.checked { color: #fff; }
.axes { margin: -1px 0 0 auto; display: flex; gap: 8px; }
.axes > div { width: 53px; padding-left: 6px; }
.axes > div:first-child { width: 52px; }
.order { height: 20px; flex: none; margin-top: 2px; border: 1px solid #475169; border-radius: 5px; display: flex; text-align: center; color: #333c4f; line-height: 20px; overflow: hidden; }
.order div { flex: 1; background: linear-gradient(#5873a5, #6c84b1); }
.order div + div { background: #555; }
.phead.first { margin-top: 7px; }
.vectors { display: flex; gap: 8px; margin-top: 5px; }
.vectors > div { width: 174px; display: flex; flex-direction: column; }
.vectors label { line-height: 18px; }
.stack { height: 60px; flex-direction: column; border-radius: 10px; align-items: stretch; background: none; }
.stack > div { background: linear-gradient(#9d9d9d, #b5b5b5); flex: 1; }
.stack > div + div { border-top: 1px solid #242424; }
.propbar { height: 532px; margin: 4px 0 0 8px; padding-top: 190px; }
.propbar i { height: 205px; }

.menu { position: absolute; left: 120px; top: 86px; width: 243px; height: 257px; background: rgba(25, 25, 25, .95); border-radius: 4px 4px 0 0; box-shadow: 0 2px 8px rgba(0, 0, 0, .55); color: #fff; padding-top: 1px; }
.menu > div { height: 22px; line-height: 22px; padding: 1px 0 0 6px; }
.menu > .mtitle { height: 30px; line-height: 31px; padding-top: 0; color: #a0a0a0; border-bottom: 1px solid #4a4a4a; margin-bottom: 3px; }
.menu u { text-underline-offset: 2px; text-decoration-thickness: 1px; }
.menu > .hot { color: #000; background: linear-gradient(#7ca3e8, #5a81c8); }
.tip { position: absolute; left: 134px; top: 277px; width: 244px; height: 35px; line-height: 37px; padding-left: 12px; color: #fff; background: rgba(25, 25, 25, .92); border-radius: 7px; box-shadow: 0 2px 7px rgba(0, 0, 0, .6); letter-spacing: .02px; }
.mark { position: absolute; border: 5px solid #fff200; }
.mark-map { left: 5px; top: 307px; width: 79px; height: 29px; }
.mark-uv { left: 118px; top: 249px; width: 245px; height: 24px; }
.mark-gen { left: 114px; top: 341px; width: 252px; height: 22px; border-bottom-width: 4px; }
.digit { position: absolute; color: #fff200; font: 20px/22px "DejaVu Sans", sans-serif; -webkit-text-stroke: .8px #fff200; }
.d1 { left: 961px; top: 476px; font-size: 25px; transform: scaleX(.9); }
.d2 { left: 94px; top: 342px; transform: scaleX(1.500); }
.d3 { left: 95px; top: 249px; transform: scaleX(1.450); }

.taskbar { height: 40px; display: flex; background: linear-gradient(90deg, #353838 0, #343535 620px, #302b29 760px, #332e2b 900px, #303234 1000px, #222 1180px, #0a0a0a 1260px); color: #fff; font-family: "Open Sans", "Noto Sans", sans-serif; font-stretch: normal; }
.taskbar > * { flex: none; }
.start { width: 48px; background: #050505; padding: 12px 0 0 16px; }
.start svg { width: 16px; height: 16px; }
.search { width: 344px; background: #f2f2f2; color: #3b3b3b; display: flex; align-items: center; padding: 0 15px 0 9px; font-size: 15px; }
.search i { width: 21px; height: 21px; border: 3px solid #111; border-radius: 50%; margin-right: 10px; }
.search span { letter-spacing: -.55px; }
.search svg { width: 12px; height: 18px; margin-left: auto; }
.apps { display: flex; gap: 1px; margin-left: 3px; }
.apps > div { width: 48px; display: flex; align-items: center; justify-content: center; background: linear-gradient(#76b9ed, #76b9ed) center bottom/0 2px no-repeat; }
.apps svg { width: 24px; height: 24px; }
.apps > .run { background-size: 40px 2px; }
.apps > .now { background-color: #5b5d5e; background-size: 48px 2px; }
.tray { width: 120px; height: 24px; margin: 8px 0 0 293px; }
.time { width: 72px; margin-left: -3px; display: flex; flex-direction: column; align-items: center; font-size: 12px; line-height: 18px; padding-top: 2px; letter-spacing: -.45px; }
.note { width: 36px; margin-left: 8px; padding: 12px 0 0 0; position: relative; }
.note svg { width: 16px; height: 15px; }
.note b { position: absolute; left: 8px; top: 19px; width: 16px; height: 16px; border-radius: 50%; background: #3a3a3a; border: 1px solid #999; font: 11px/14px "Open Sans", sans-serif; text-align: center; }
.peek { width: 5px; border-left: 1px solid #777; }
```
